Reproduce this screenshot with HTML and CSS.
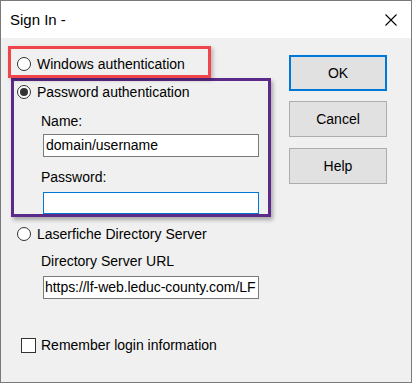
FILE: index.html
```html
<!DOCTYPE html>
<html>
<head>
<meta charset="utf-8">
<title>Sign In</title>
<link rel="stylesheet" href="styles.css">
</head>
<body>
<div class="window">
  <div class="titlebar">
    <span class="title">Sign In -</span>
    <svg class="close" width="12" height="12" viewBox="0 0 12 12"><path d="M0.5 0.5 L11.5 11.5 M11.5 0.5 L0.5 11.5" stroke="#000" stroke-width="1.1" fill="none"/></svg>
  </div>
  <div class="content">
    <div class="left">
      <div class="hl-red">
        <div class="opt"><span class="radio"></span><span>Windows authentication</span></div>
      </div>
      <div class="hl-purple">
        <div class="opt"><span class="radio checked"></span><span>Password authentication</span></div>
        <div class="field-label name-label">Name:</div>
        <div class="input">domain/username</div>
        <div class="field-label pw-label">Password:</div>
        <div class="input focus pw-input"></div>
      </div>
      <div class="opt lf"><span class="radio"></span><span>Laserfiche Directory Server</span></div>
      <div class="field-label url-label">Directory Server URL</div>
      <div class="input url-input">https://lf-web.leduc-county.com/LF</div>
      <div class="check-row"><span class="checkbox"></span><span>Remember login information</span></div>
    </div>
    <div class="buttons">
      <div class="btn default">OK</div>
      <div class="btn cancel">Cancel</div>
      <div class="btn help">Help</div>
    </div>
  </div>
</div>
</body>
</html>
```
FILE: styles.css
```css
html, body {
  margin: 0;
  padding: 0;
  background: #f0f0f0;
}
.window {
  width: 412px;
  height: 383px;
  box-sizing: border-box;
  border: 1px solid #7a7a7a;
  background: #f0f0f0;
  font-family: "Liberation Sans", Arial, sans-serif;
  font-size: 14px;
  color: #000;
  overflow: hidden;
}
.titlebar {
  height: 37px;
  background: #fff;
  display: flex;
  align-items: center;
  justify-content: space-between;
  padding-left: 9px;
  padding-right: 14px;
}
.title {
  font-size: 15px;
}
.close {
  display: block;
  margin-top: 1px;
}
.content {
  display: flex;
}
.left {
  width: 288px;
  padding-top: 8px;
}
.hl-red {
  margin-left: 7px;
  width: 203px;
  height: 32px;
  box-sizing: border-box;
  border: 3px solid #f0464b;
  padding: 5px 0 1px 6px;
  box-shadow: 2px 2px 4px rgba(0,0,0,0.25);
  position: relative;
  z-index: 1;
}
.hl-purple {
  margin-left: 10px;
  width: 260px;
  box-sizing: border-box;
  border: 3px solid #5c2a88;
  padding: 1px 0 0 3px;
  box-shadow: 2px 3px 4px rgba(0,0,0,0.3);
}
.opt {
  display: flex;
  align-items: center;
  height: 20px;
  gap: 6px;
}
.radio {
  width: 14px;
  height: 14px;
  box-sizing: border-box;
  border: 1px solid #333;
  border-radius: 50%;
  background: #fff;
  display: flex;
  align-items: center;
  justify-content: center;
}
.radio.checked::after {
  content: "";
  width: 8px;
  height: 8px;
  border-radius: 50%;
  background: #333;
}
.field-label {
  height: 20px;
  line-height: 20px;
}
.name-label {
  margin-top: 9px;
  margin-left: 24px;
}
.pw-label {
  margin-top: 10px;
  margin-left: 24px;
}
.input {
  width: 216px;
  height: 23px;
  box-sizing: border-box;
  border: 1px solid #7a7a7a;
  background: #fff;
  padding-left: 2px;
  line-height: 21px;
  white-space: nowrap;
  overflow: hidden;
  margin-top: 3px;
  margin-left: 26px;
}
.input.focus {
  border-color: #0078d7;
}
.pw-input {
  margin-top: 5px;
  height: 22px;
}
.lf {
  margin-top: 7px;
  margin-left: 16px;
}
.url-label {
  margin-top: 7px;
  margin-left: 40px;
}
.url-input {
  margin-top: 5px;
  margin-left: 42px;
  padding-left: 1px;
  letter-spacing: -0.05px;
}
.check-row {
  display: flex;
  align-items: center;
  height: 20px;
  gap: 5px;
  margin-top: 36px;
  margin-left: 20px;
}
.checkbox {
  width: 15px;
  height: 15px;
  box-sizing: border-box;
  border: 1px solid #333;
  background: #fff;
}
.buttons {
  width: 98px;
  padding-top: 17px;
  display: flex;
  flex-direction: column;
}
.btn {
  height: 36px;
  box-sizing: border-box;
  border: 1px solid #adadad;
  background: #e1e1e1;
  display: flex;
  align-items: center;
  justify-content: center;
}
.btn.default {
  border: 2px solid #0078d7;
}
.btn.cancel {
  margin-top: 10px;
}
.btn.help {
  margin-top: 11px;
}
```
